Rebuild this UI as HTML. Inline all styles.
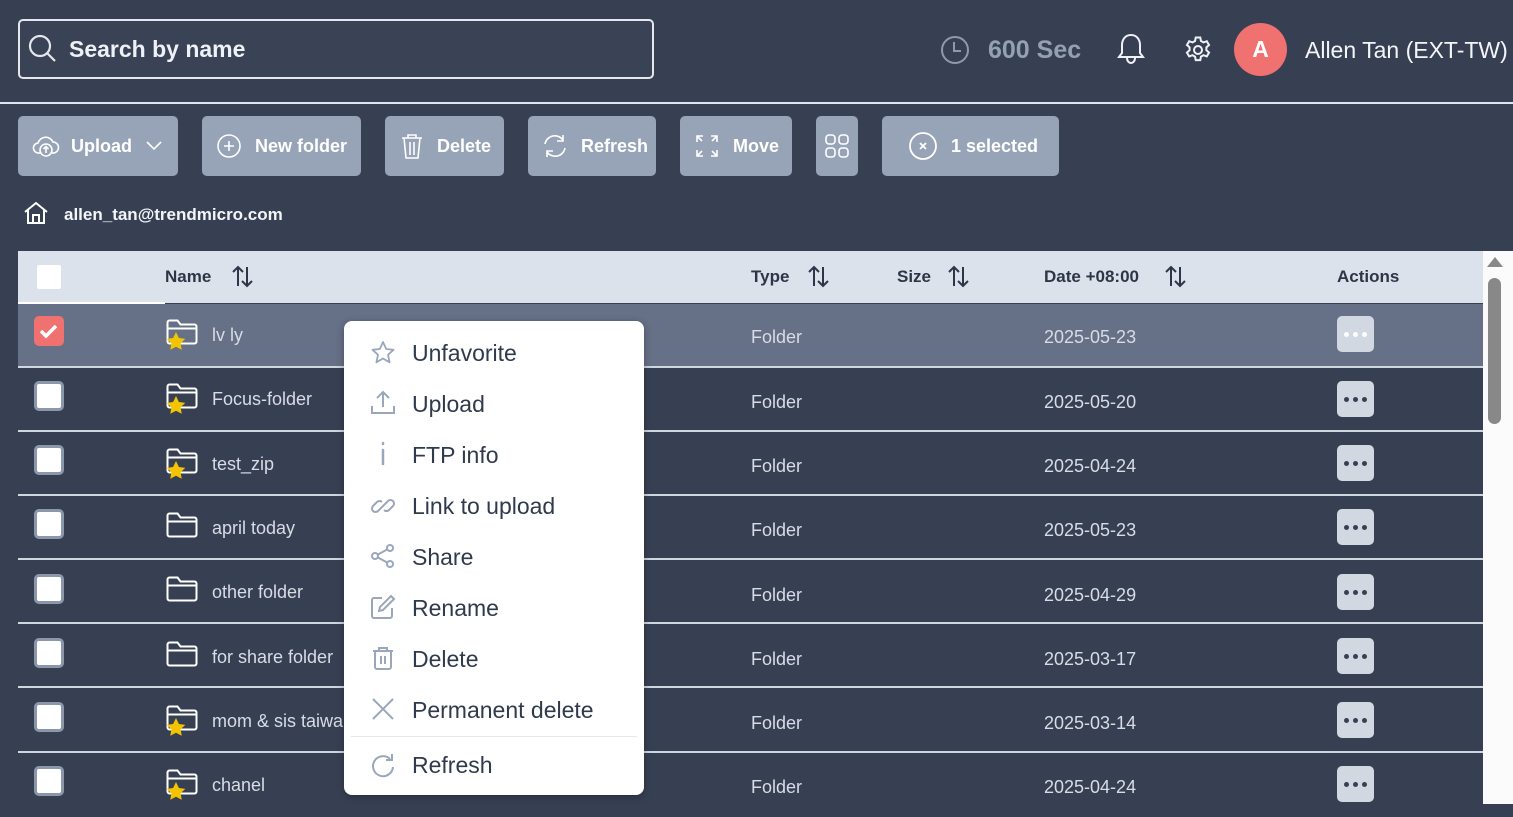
<!DOCTYPE html>
<html><head><meta charset="utf-8"><style>
*{box-sizing:border-box;margin:0;padding:0}
body{width:1513px;height:804px;overflow:hidden;background:#374053;font-family:"Liberation Sans",sans-serif;position:relative;color:#fff}
.a{position:absolute}
.search{left:18px;top:19px;width:636px;height:60px;border:2px solid #e5e7eb;border-radius:5px;background:#3a4256}
.search span{position:absolute;left:49px;top:15px;font-size:23px;font-weight:bold;color:#eef1f5}
.sep{left:0;top:102px;width:1513px;height:2px;background:#dfe3ea}
.btn{top:116px;height:60px;background:#97a3b6;border-radius:5px;color:#fff;font-size:18px;font-weight:bold;display:flex;align-items:center}
.btn svg{flex:none}
.thead{left:18px;top:251px;width:1465px;height:52px;background:#dbe2ec}
.th{top:267px;font-size:17px;font-weight:bold;color:#2d3646}
.row{left:18px;width:1465px;height:64px;border-bottom:2px solid #cfd6e0}
.cb{left:34px;width:30px;height:30px;background:#fff;border:3px solid #8b97ab;border-radius:5px}
.nm{left:212px;font-size:18px;color:#d7dce5}
.ty{left:751px;font-size:18px;color:#d7dce5}
.dt{left:1044px;font-size:18px;color:#d7dce5}
.dots{left:1337px;width:37px;height:36px;background:#d2d8e2;border-radius:5px;display:flex;justify-content:center;align-items:center;gap:4px}
.dots i{width:5px;height:5px;border-radius:50%;background:#374053;display:block}
.menu{left:344px;top:321px;width:300px;height:474px;background:#fff;border-radius:8px;box-shadow:0 2px 8px rgba(0,0,0,.3)}
.mi{left:68px;font-size:23px;color:#2f3a4c;position:absolute}
.mic{left:26px;position:absolute}
</style></head><body>
<div class="a search">
<svg class="a" style="left:7px;top:12px" width="32" height="32" viewBox="0 0 32 32" fill="none" stroke="#e5e7eb" stroke-width="2.2"><circle cx="13" cy="13" r="10"/><path d="M20.5 20.5L28 28"/></svg>
<span>Search by name</span></div>
<svg class="a" style="left:939px;top:34px" width="32" height="32" viewBox="0 0 32 32" fill="none" stroke="#8e99ab" stroke-width="2"><circle cx="16" cy="16" r="13"/><path d="M15 8v9h7"/></svg>
<div class="a" style="left:988px;top:36px;font-size:25px;font-weight:bold;color:#94a0b3">600 Sec</div>
<svg class="a" style="left:1115px;top:32px" width="32" height="34" viewBox="0 0 32 34" fill="none" stroke="#eef1f5" stroke-width="2"><path d="M16 3c-6 0-9 5-9 10v8l-3 4h24l-3-4v-8c0-5-3-10-9-10z"/><path d="M12 26c0 3 2 5 4 5s4-2 4-5"/></svg>
<svg class="a" style="left:1182px;top:34px" width="32" height="32" viewBox="0 0 24 24" fill="none" stroke="#eef1f5" stroke-width="1.5"><path d="M10.3 2.6h3.4l.5 2.6 1.9 1.1 2.5-.9 1.7 2.9-2 1.7v2.2l2 1.7-1.7 2.9-2.5-.9-1.9 1.1-.5 2.6h-3.4l-.5-2.6-1.9-1.1-2.5.9-1.7-2.9 2-1.7v-2.2l-2-1.7 1.7-2.9 2.5.9 1.9-1.1z"/><circle cx="12" cy="12" r="3"/></svg>
<div class="a" style="left:1234px;top:23px;width:53px;height:53px;border-radius:50%;background:#ef7170;font-size:23px;font-weight:bold;text-align:center;line-height:53px">A</div>
<div class="a" style="left:1305px;top:37px;font-size:23px;color:#f3f5f8">Allen Tan (EXT-TW)</div>
<div class="a sep"></div>

<div class="a btn" style="left:18px;width:160px"><svg style="margin-left:14px" width="28" height="26" viewBox="0 0 28 26" fill="none" stroke="#fff" stroke-width="1.6"><path d="M8 20H7a5 5 0 0 1-1-10 8 8 0 0 1 15-1 5.5 5.5 0 0 1 0 11h-1"/><circle cx="14" cy="17" r="6"/><path d="M14 20v-6M11.5 16l2.5-2.5 2.5 2.5"/></svg><span style="margin-left:11px">Upload</span><svg style="margin-left:14px" width="16" height="10" viewBox="0 0 16 10" fill="none" stroke="#fff" stroke-width="1.6"><path d="M1 1l7 7 7-7"/></svg></div>
<div class="a btn" style="left:202px;width:159px"><svg style="margin-left:14px" width="26" height="26" viewBox="0 0 26 26" fill="none" stroke="#fff" stroke-width="1.6"><circle cx="13" cy="13" r="11"/><path d="M13 8v10M8 13h10"/></svg><span style="margin-left:13px">New folder</span></div>
<div class="a btn" style="left:385px;width:119px"><svg style="margin-left:14px" width="26" height="28" viewBox="0 0 26 28" fill="none" stroke="#fff" stroke-width="1.6"><path d="M3 6h20M9 6V3h8v3M5 6l2 20h12l2-20M11 10v13M15 10v13"/></svg><span style="margin-left:12px">Delete</span></div>
<div class="a btn" style="left:528px;width:128px"><svg style="margin-left:13px" width="28" height="28" viewBox="0 0 28 28" fill="none" stroke="#fff" stroke-width="1.6"><path d="M4 12a10 10 0 0 1 18-4M24 16a10 10 0 0 1-18 4M22 3v6h-6M6 25v-6h6"/></svg><span style="margin-left:12px">Refresh</span></div>
<div class="a btn" style="left:680px;width:112px"><svg style="margin-left:14px" width="26" height="26" viewBox="0 0 26 26" fill="none" stroke="#fff" stroke-width="1.6"><path d="M3 9V3h6M3 3l5 5M23 9V3h-6M23 3l-5 5M3 17v6h6M3 23l5-5M23 17v6h-6M23 23l-5-5"/></svg><span style="margin-left:13px">Move</span></div>
<div class="a btn" style="left:816px;width:42px"><svg style="margin-left:9px" width="24" height="24" viewBox="0 0 24 24" fill="none" stroke="#fff" stroke-width="1.6"><rect x="1" y="1" width="9" height="9" rx="3"/><rect x="14" y="1" width="9" height="9" rx="3"/><rect x="1" y="14" width="9" height="9" rx="3"/><rect x="14" y="14" width="9" height="9" rx="3"/></svg></div>
<div class="a btn" style="left:882px;width:177px"><svg style="margin-left:26px" width="30" height="30" viewBox="0 0 30 30" fill="none" stroke="#fff" stroke-width="1.8"><circle cx="15" cy="15" r="13"/><path d="M12 12l6 6M18 12l-6 6"/></svg><span style="margin-left:13px">1 selected</span></div>

<svg class="a" style="left:23px;top:201px" width="26" height="24" viewBox="0 0 26 24" fill="none" stroke="#fff" stroke-width="2"><path d="M2 11L13 2l11 9M5 9v13h16V9M10 22v-8h6v8"/></svg>
<div class="a" style="left:64px;top:205px;font-size:17px;font-weight:bold;color:#f3f5f8">allen_tan@trendmicro.com</div>

<div class="a thead"></div>
<div class="a" style="left:18px;top:302px;width:147px;height:2px;background:#fff"></div>
<div class="a cb" style="top:262px;border-color:#dbe2ec;background:#fff"></div>
<div class="a th" style="left:165px">Name</div>
<div class="a th" style="left:751px">Type</div>
<div class="a th" style="left:897px">Size</div>
<div class="a th" style="left:1044px">Date +08:00</div>
<div class="a th" style="left:1337px">Actions</div>
<svg class="a" style="left:230px;top:264px" width="26" height="26" viewBox="0 0 26 26" fill="none" stroke="#2d3646" stroke-width="2"><path d="M8 22V3M3 8l5-5 5 5M17 3v19M12 17l5 5 5-5"/></svg>
<svg class="a" style="left:806px;top:264px" width="26" height="26" viewBox="0 0 26 26" fill="none" stroke="#2d3646" stroke-width="2"><path d="M8 22V3M3 8l5-5 5 5M17 3v19M12 17l5 5 5-5"/></svg>
<svg class="a" style="left:946px;top:264px" width="26" height="26" viewBox="0 0 26 26" fill="none" stroke="#2d3646" stroke-width="2"><path d="M8 22V3M3 8l5-5 5 5M17 3v19M12 17l5 5 5-5"/></svg>
<svg class="a" style="left:1163px;top:264px" width="26" height="26" viewBox="0 0 26 26" fill="none" stroke="#2d3646" stroke-width="2"><path d="M8 22V3M3 8l5-5 5 5M17 3v19M12 17l5 5 5-5"/></svg>

<div class="a" style="left:1483px;top:251px;width:30px;height:553px;background:#fbfbfb"></div>
<div class="a" style="left:1487px;top:257px;width:0;height:0;border-left:8px solid transparent;border-right:8px solid transparent;border-bottom:10px solid #888"></div>
<div class="a" style="left:1488px;top:278px;width:13px;height:146px;background:#888;border-radius:7px"></div>

<svg width="0" height="0" style="position:absolute"><defs>
<g id="fd"><path d="M1.5 4.5a2 2 0 0 1 2-2h8l3 4h14a2 2 0 0 1 2 2v15a2 2 0 0 1-2 2h-25a2 2 0 0 1-2-2z M1.5 10.5h29" fill="none" stroke="#fff" stroke-width="2"/></g>
<path id="st" d="M10 14l2.9 6 6.4.9-4.7 4.4 1.1 6.4L10 28.7 4.3 31.7l1.1-6.4L.7 20.9l6.4-.9z" fill="#f5c400"/>
</defs></svg>

<!-- row 1 selected -->
<div class="a row" style="top:304px;background:#667086"></div>
<div class="a cb" style="top:316px;background:#ef7170;border-color:#ef7170"><svg width="24" height="24" viewBox="0 0 24 24" fill="none" stroke="#fff" stroke-width="3.5"><path d="M4 12l5 5 10-10"/></svg></div>
<svg class="a" style="left:166px;top:318px" width="34" height="34"><use href="#fd"/><use href="#st"/></svg>
<div class="a nm" style="top:325px">lv ly</div><div class="a ty" style="top:327px">Folder</div><div class="a dt" style="top:327px">2025-05-23</div>
<div class="a dots" style="top:316px;background:#d2d8e2"><i style="background:#fff"></i><i style="background:#fff"></i><i style="background:#fff"></i></div>

<div class="a row" style="top:368px"></div>
<div class="a cb" style="top:381px"></div><svg class="a" style="left:166px;top:382px" width="34" height="34"><use href="#fd"/><use href="#st"/></svg>
<div class="a nm" style="top:389px">Focus-folder</div><div class="a ty" style="top:392px">Folder</div><div class="a dt" style="top:392px">2025-05-20</div>
<div class="a dots" style="top:381px"><i></i><i></i><i></i></div>

<div class="a row" style="top:432px"></div>
<div class="a cb" style="top:445px"></div><svg class="a" style="left:166px;top:447px" width="34" height="34"><use href="#fd"/><use href="#st"/></svg>
<div class="a nm" style="top:454px">test_zip</div><div class="a ty" style="top:456px">Folder</div><div class="a dt" style="top:456px">2025-04-24</div>
<div class="a dots" style="top:445px"><i></i><i></i><i></i></div>

<div class="a row" style="top:496px"></div>
<div class="a cb" style="top:509px"></div><svg class="a" style="left:166px;top:511px" width="34" height="34"><use href="#fd"/></svg>
<div class="a nm" style="top:518px">april today</div><div class="a ty" style="top:520px">Folder</div><div class="a dt" style="top:520px">2025-05-23</div>
<div class="a dots" style="top:509px"><i></i><i></i><i></i></div>

<div class="a row" style="top:560px"></div>
<div class="a cb" style="top:574px"></div><svg class="a" style="left:166px;top:575px" width="34" height="34"><use href="#fd"/></svg>
<div class="a nm" style="top:582px">other folder</div><div class="a ty" style="top:585px">Folder</div><div class="a dt" style="top:585px">2025-04-29</div>
<div class="a dots" style="top:574px"><i></i><i></i><i></i></div>

<div class="a row" style="top:624px"></div>
<div class="a cb" style="top:638px"></div><svg class="a" style="left:166px;top:640px" width="34" height="34"><use href="#fd"/></svg>
<div class="a nm" style="top:647px">for share folder</div><div class="a ty" style="top:649px">Folder</div><div class="a dt" style="top:649px">2025-03-17</div>
<div class="a dots" style="top:638px"><i></i><i></i><i></i></div>

<div class="a row" style="top:689px"></div>
<div class="a cb" style="top:702px"></div><svg class="a" style="left:166px;top:704px" width="34" height="34"><use href="#fd"/><use href="#st"/></svg>
<div class="a nm" style="top:711px">mom &amp; sis taiwan</div><div class="a ty" style="top:713px">Folder</div><div class="a dt" style="top:713px">2025-03-14</div>
<div class="a dots" style="top:702px"><i></i><i></i><i></i></div>

<div class="a row" style="top:753px;border:none"></div>
<div class="a cb" style="top:766px"></div><svg class="a" style="left:166px;top:768px" width="34" height="34"><use href="#fd"/><use href="#st"/></svg>
<div class="a nm" style="top:775px">chanel</div><div class="a ty" style="top:777px">Folder</div><div class="a dt" style="top:777px">2025-04-24</div>
<div class="a dots" style="top:766px"><i></i><i></i><i></i></div>

<div class="a menu">
<svg class="mic" style="top:19px" width="26" height="26" viewBox="0 0 26 26" fill="none" stroke="#9aa7bb" stroke-width="1.8" stroke-linejoin="round"><path d="M13 2l3.2 7 7.3.8-5.5 5 1.6 7.5L13 18.5l-6.6 3.8L8 14.8l-5.5-5 7.3-.8z"/></svg>
<div class="mi" style="top:19px">Unfavorite</div>
<svg class="mic" style="top:69px" width="26" height="26" viewBox="0 0 26 26" fill="none" stroke="#9aa7bb" stroke-width="2"><path d="M13 17V2M7 8l6-6 6 6M2 16v7h22v-7"/></svg>
<div class="mi" style="top:70px">Upload</div>
<svg class="mic" style="top:120px" width="26" height="26" viewBox="0 0 26 26" fill="none" stroke="#9aa7bb" stroke-width="2.5" stroke-linecap="round"><path d="M13 2v1M13 9v14"/></svg>
<div class="mi" style="top:121px">FTP info</div>
<svg class="mic" style="top:172px" width="26" height="26" viewBox="0 0 26 26" fill="none" stroke="#9aa7bb" stroke-width="2"><path d="M11 15l-3 3a3.5 3.5 0 0 1-5-5l4-4a3.5 3.5 0 0 1 5 0M15 11l3-3a3.5 3.5 0 0 1 5 5l-4 4a3.5 3.5 0 0 1-5 0M10 16l6-6"/></svg>
<div class="mi" style="top:172px">Link to upload</div>
<svg class="mic" style="top:222px" width="26" height="26" viewBox="0 0 26 26" fill="none" stroke="#9aa7bb" stroke-width="2"><circle cx="20" cy="5" r="3"/><circle cx="5" cy="13" r="3"/><circle cx="20" cy="21" r="3"/><path d="M8 11.5l9-5M8 14.5l9 5"/></svg>
<div class="mi" style="top:223px">Share</div>
<svg class="mic" style="top:273px" width="26" height="26" viewBox="0 0 26 26" fill="none" stroke="#9aa7bb" stroke-width="2"><path d="M12 4H4a2 2 0 0 0-2 2v16a2 2 0 0 0 2 2h16a2 2 0 0 0 2-2v-8M21 2l3 3-11 11-4 1 1-4z"/></svg>
<div class="mi" style="top:274px">Rename</div>
<svg class="mic" style="top:324px" width="26" height="26" viewBox="0 0 26 26" fill="none" stroke="#9aa7bb" stroke-width="2"><path d="M3 6h20M9 6V3h8v3M5 6v16a2 2 0 0 0 2 2h12a2 2 0 0 0 2-2V6M11 11v8M15 11v8"/></svg>
<div class="mi" style="top:325px">Delete</div>
<svg class="mic" style="top:375px" width="26" height="26" viewBox="0 0 26 26" fill="none" stroke="#9aa7bb" stroke-width="2"><path d="M3 3l20 20M23 3L3 23"/></svg>
<div class="mi" style="top:376px">Permanent delete</div>
<div class="a" style="left:7px;top:415px;width:286px;height:1px;background:#e3e7ee"></div>
<svg class="mic" style="top:431px" width="26" height="26" viewBox="0 0 26 26" fill="none" stroke="#9aa7bb" stroke-width="2"><path d="M20 7a10 10 0 1 0 3 8M22 2v6h-6"/></svg>
<div class="mi" style="top:431px">Refresh</div>
</div>
</body></html>
